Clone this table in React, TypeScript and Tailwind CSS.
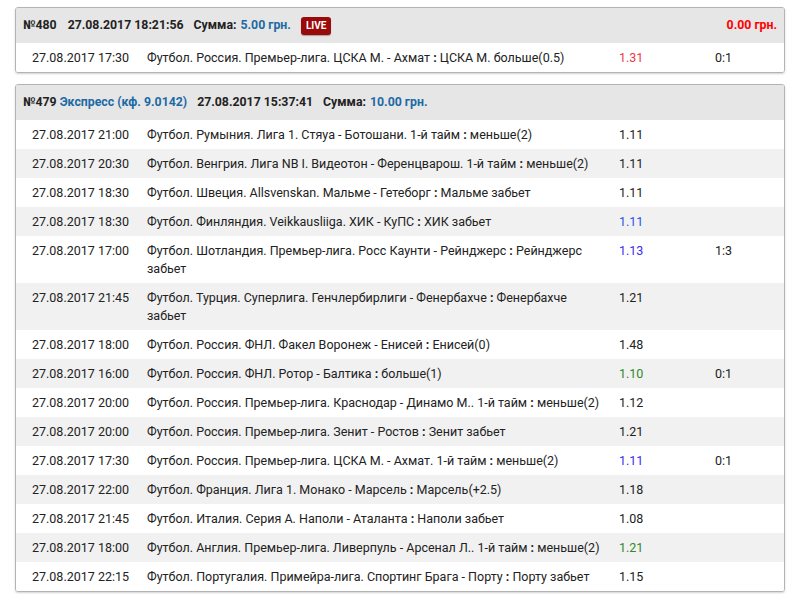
import React from 'react';

interface Bet {
  date: string;
  event: string;
  outcome: string;
  odds: string;
  oddsColor?: string;
  score?: string;
}

const single: Bet[] = [
  { date: '27.08.2017 17:30', event: 'Футбол. Россия. Премьер-лига. ЦСКА М. - Ахмат', outcome: 'ЦСКА М. больше(0.5)', odds: '1.31', oddsColor: 'text-[#f0364a]', score: '0:1' },
];

const express: Bet[] = [
  { date: '27.08.2017 21:00', event: 'Футбол. Румыния. Лига 1. Стяуа - Ботошани. 1-й тайм', outcome: 'меньше(2)', odds: '1.11' },
  { date: '27.08.2017 20:30', event: 'Футбол. Венгрия. Лига NB I. Видеотон - Ференцварош. 1-й тайм', outcome: 'меньше(2)', odds: '1.11' },
  { date: '27.08.2017 18:30', event: 'Футбол. Швеция. Allsvenskan. Мальме - Гетеборг', outcome: 'Мальме забьет', odds: '1.11' },
  { date: '27.08.2017 18:30', event: 'Футбол. Финляндия. Veikkausliiga. ХИК - КуПС', outcome: 'ХИК забьет', odds: '1.11', oddsColor: 'text-[#2a52e8]' },
  { date: '27.08.2017 17:00', event: 'Футбол. Шотландия. Премьер-лига. Росс Каунти - Рейнджерс', outcome: 'Рейнджерс забьет', odds: '1.13', oddsColor: 'text-[#3a2cf0]', score: '1:3' },
  { date: '27.08.2017 21:45', event: 'Футбол. Турция. Суперлига. Генчлербирлиги - Фенербахче', outcome: 'Фенербахче забьет', odds: '1.21' },
  { date: '27.08.2017 18:00', event: 'Футбол. Россия. ФНЛ. Факел Воронеж - Енисей', outcome: 'Енисей(0)', odds: '1.48' },
  { date: '27.08.2017 16:00', event: 'Футбол. Россия. ФНЛ. Ротор - Балтика', outcome: 'больше(1)', odds: '1.10', oddsColor: 'text-[#2f8a2a]', score: '0:1' },
  { date: '27.08.2017 20:00', event: 'Футбол. Россия. Премьер-лига. Краснодар - Динамо М.. 1-й тайм', outcome: 'меньше(2)', odds: '1.12' },
  { date: '27.08.2017 20:00', event: 'Футбол. Россия. Премьер-лига. Зенит - Ростов', outcome: 'Зенит забьет', odds: '1.21' },
  { date: '27.08.2017 17:30', event: 'Футбол. Россия. Премьер-лига. ЦСКА М. - Ахмат. 1-й тайм', outcome: 'меньше(2)', odds: '1.11', oddsColor: 'text-[#3a2cf0]', score: '0:1' },
  { date: '27.08.2017 22:00', event: 'Футбол. Франция. Лига 1. Монако - Марсель', outcome: 'Марсель(+2.5)', odds: '1.18' },
  { date: '27.08.2017 21:45', event: 'Футбол. Италия. Серия А. Наполи - Аталанта', outcome: 'Наполи забьет', odds: '1.08' },
  { date: '27.08.2017 18:00', event: 'Футбол. Англия. Премьер-лига. Ливерпуль - Арсенал Л.. 1-й тайм', outcome: 'меньше(2)', odds: '1.21', oddsColor: 'text-[#2f8a2a]' },
  { date: '27.08.2017 22:15', event: 'Футбол. Португалия. Примейра-лига. Спортинг Брага - Порту', outcome: 'Порту забьет', odds: '1.15' },
];

const BetRow: React.FC<{ bet: Bet; index: number }> = ({ bet, index }) => (
  <div
    className={`grid grid-cols-[131px_472px_96px_1fr] text-[12.5px] leading-[18px] text-[#222] pt-[6px] pb-[5px] ${
      index % 2 === 1 ? 'bg-[#f1f1f1]' : 'bg-white'
    }`}
  >
    <div className="pl-[16px]">{bet.date}</div>
    <div className="pr-[16px]">
      {bet.event} <b className="font-bold">:</b> {bet.outcome}
    </div>
    <div className={bet.oddsColor ?? ''}>{bet.odds}</div>
    <div>{bet.score}</div>
  </div>
);

const Card: React.FC<{ header: React.ReactNode; bets: Bet[] }> = ({ header, bets }) => (
  <div className="border border-[#b4b4b4] rounded-[3px] shadow-[0_1px_2px_rgba(0,0,0,0.18)] overflow-hidden">
    <div className="bg-[#e6e6e6] h-[35px] flex items-center pl-[7px] pr-[7px] text-[12.3px] font-bold text-[#222]">
      {header}
    </div>
    {bets.map((b, i) => (
      <BetRow key={i} bet={b} index={i} />
    ))}
  </div>
);

export default function App() {
  return (
    <div className="bg-white min-h-[599px] pl-[15px] pt-[7px] w-[785px] flex flex-col gap-[11px] font-['Roboto',sans-serif]">
      <Card
        bets={single}
        header={
          <>
            <span>№480</span>
            <span className="ml-[11px]">27.08.2017 18:21:56</span>
            <span className="ml-[10px]">Сумма:</span>
            <span className="ml-[4px] text-[#1d6aa5]">5.00 грн.</span>
            <span className="ml-[10px] bg-[#9b0a0a] text-white text-[10px] leading-[18px] px-[5px] rounded-[3px] shadow-[0_1px_1px_rgba(0,0,0,0.3)]">
              LIVE
            </span>
            <span className="ml-auto text-[#ff0000]">0.00 грн.</span>
          </>
        }
      />
      <Card
        bets={express}
        header={
          <>
            <span>№479</span>
            <span className="ml-[3px] text-[#1d6aa5]">Экспресс (кф. 9.0142)</span>
            <span className="ml-[10px]">27.08.2017 15:37:41</span>
            <span className="ml-[10px]">Сумма:</span>
            <span className="ml-[4px] text-[#1d6aa5]">10.00 грн.</span>
          </>
        }
      />
    </div>
  );
}
